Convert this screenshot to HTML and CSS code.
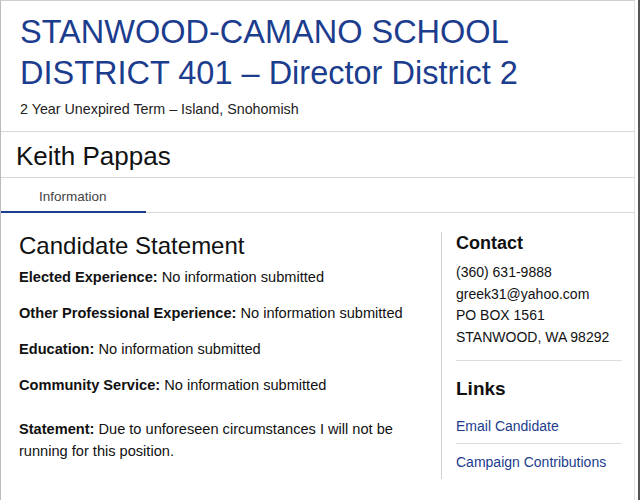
FILE: index.html
```html
<!DOCTYPE html>
<html lang="en">
<head>
    <meta charset="UTF-8">
    <meta name="viewport" content="width=device-width, initial-scale=1.0">
    <title>Keith Pappas - Candidate Information</title>
    <link rel="stylesheet" href="styles.css">
</head>
<body>
    <div class="page">
        <header class="race">
            <h1 class="race-title">STANWOOD-CAMANO SCHOOL DISTRICT 401 – Director District 2</h1>
            <p class="race-term">2 Year Unexpired Term – Island, Snohomish</p>
        </header>

        <div class="candidate">
            <h2 class="candidate-name">Keith Pappas</h2>
        </div>

        <nav class="tabs">
            <a class="tab active" href="#">Information</a>
        </nav>

        <div class="content">
            <section class="statement">
                <h3 class="section-title">Candidate Statement</h3>
                <p class="field"><b>Elected Experience:</b> No information submitted</p>
                <p class="field"><b>Other Professional Experience:</b> No information submitted</p>
                <p class="field"><b>Education:</b> No information submitted</p>
                <p class="field"><b>Community Service:</b> No information submitted</p>
                <p class="field field-statement"><b>Statement:</b> Due to unforeseen circumstances I will not be running for this position.</p>
            </section>

            <aside class="sidebar">
                <h4 class="side-title">Contact</h4>
                <div class="contact-lines">
                    <div>(360) 631-9888</div>
                    <div>greek31@yahoo.com</div>
                    <div>PO BOX 1561</div>
                    <div>STANWOOD, WA 98292</div>
                </div>
                <h4 class="side-title links-title">Links</h4>
                <ul class="links">
                    <li><a href="#">Email Candidate</a></li>
                    <li><a href="#">Campaign Contributions</a></li>
                </ul>
            </aside>
        </div>
    </div>
</body>
</html>
```

FILE: styles.css
```css
html {
    background: #fff;
}

body {
    margin: 0;
    height: 500px;
    border-right: 2px solid #555;
    font-family: "Liberation Sans", Arial, sans-serif;
    color: #111;
}

.page {
    width: 633px;
    height: 499px;
    border-top: 1px solid #cfcfcf;
    border-left: 1px solid #bbb;
    border-right: 1px solid #e4e4e4;
}

.race {
    padding: 11px 19px 12px;
    border-bottom: 1px solid #d8d8d8;
}

.race-title {
    margin: 0;
    font-size: 32.5px;
    line-height: 41px;
    font-weight: normal;
    color: #1c3c8e;
}

.race-term {
    margin: 5px 0 0;
    font-size: 14.3px;
    line-height: 20px;
    color: #222;
}

.candidate {
    padding: 10px 15px 7px;
    border-bottom: 1px solid #d8d8d8;
}

.candidate-name {
    margin: 0;
    font-size: 26px;
    line-height: 28px;
    font-weight: normal;
}

.tabs {
    display: flex;
    border-bottom: 1px solid #d8d8d8;
}

.tab {
    width: 145px;
    padding: 11px 0 6px 38px;
    box-sizing: border-box;
    font-size: 13.5px;
    line-height: 16px;
    color: #444;
    text-decoration: none;
    border-bottom: 2px solid transparent;
    margin-bottom: -1px;
}

.tab.active {
    border-bottom-color: #1c3c8e;
}

.content {
    display: flex;
    align-items: flex-start;
    padding: 19px 0 0 18px;
}

.statement {
    width: 422px;
}

.section-title {
    margin: 0 0 6px;
    font-size: 24px;
    line-height: 28px;
    font-weight: normal;
}

.field {
    margin: 0 0 14px;
    font-size: 14.6px;
    line-height: 22px;
}

.field-statement {
    margin-top: 22px;
}

.sidebar {
    width: 166px;
    padding: 0 0 0 14px;
    border-left: 1px solid #d0d0d0;
    font-size: 14px;
}

.side-title {
    margin: 0 0 8px;
    font-size: 18px;
    line-height: 22px;
}

.contact-lines {
    line-height: 21.5px;
    padding-bottom: 12px;
    border-bottom: 1px solid #ddd;
}

.links-title {
    margin-top: 17px;
    font-size: 19px;
}

.links {
    list-style: none;
    margin: 0;
    padding: 0;
}

.links li {
    padding: 8px 0 7px;
    line-height: 20px;
}

.links li + li {
    border-top: 1px solid #ddd;
}

.links a {
    color: #1c3c8e;
    text-decoration: none;
}
```
